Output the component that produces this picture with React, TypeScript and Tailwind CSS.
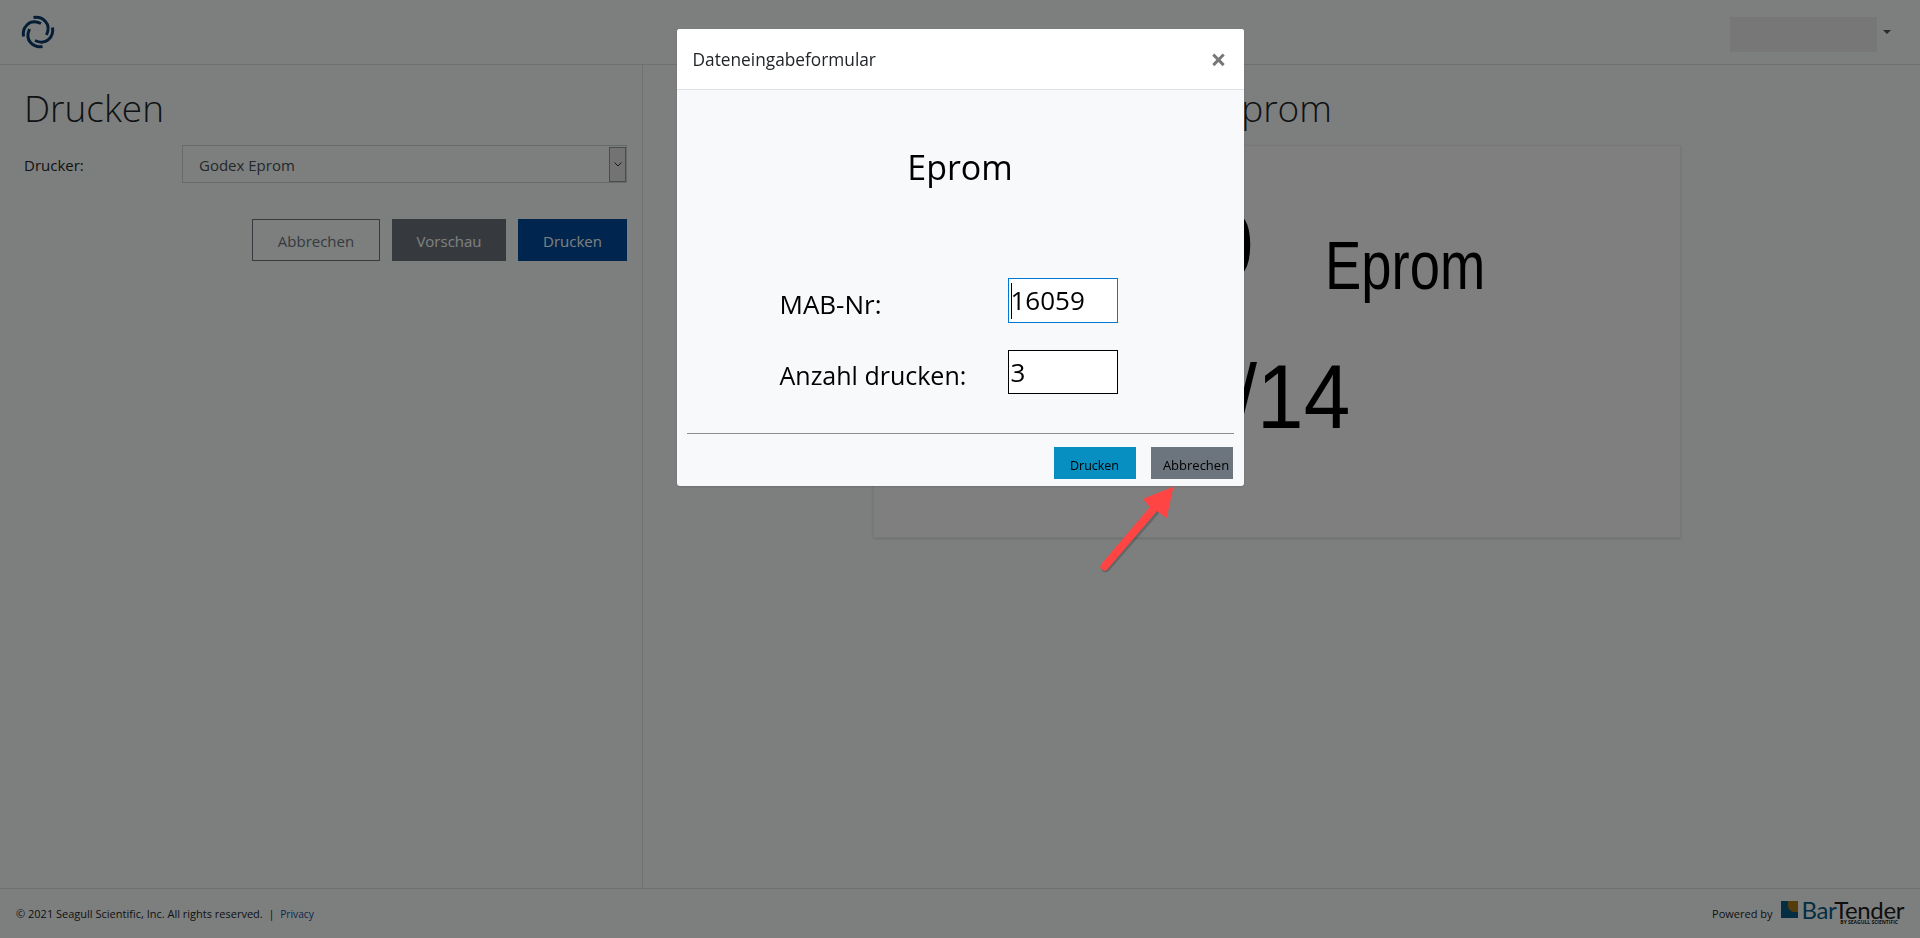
const sans = "font-['Open_Sans','Noto_Sans',sans-serif]";

const Logo = () => (
  <svg width="36" height="36" viewBox="0 0 36 36" fill="none" stroke="#0b3a6b" strokeWidth="3" className="-ml-[4px]">
    <path d="M13.500 3.500 C22 2 32 9 26.500 21" />
    <path d="M13.500 3.500 C22 2 32 9 26.500 21" transform="rotate(90 18 18)" />
    <path d="M13.500 3.500 C22 2 32 9 26.500 21" transform="rotate(180 18 18)" />
    <path d="M13.500 3.500 C22 2 32 9 26.500 21" transform="rotate(270 18 18)" />
  </svg>
);

const BarTenderLogo = () => (
  <div className="flex flex-col items-end -mt-[2px]">
    <div className="flex items-center gap-[4px] h-[19px]">
      <svg width="17" height="17" viewBox="0 0 17 17">
        <rect width="17" height="17" fill="#0b5d85" />
        <path d="M7 0 H17 V11 H13 C10 11 7 8 7 4 Z" fill="#a87a16" />
      </svg>
      <span className="font-['Lato',sans-serif] text-[24px] leading-[19px] tracking-[-0.4px]">
        <span className="text-[#0b5d85]">Bar</span>
        <span className="text-[#1c1c1c]">Tender</span>
      </span>
    </div>
    <span className={`${sans} text-[5px] leading-[6px] font-bold text-[#222] pr-[6px]`}>BY SEAGULL SCIENTIFIC</span>
  </div>
);

const PrintLabel = () => (
  <div className="relative h-full overflow-hidden font-['Liberation_Sans',sans-serif] text-black">
    <span className="absolute left-[140px] top-[52px] text-[96px] leading-[96px] scale-x-90 origin-left">16059</span>
    <span className="absolute left-[451px] top-[85px] text-[68px] leading-[68px] scale-x-[0.8] origin-left">Eprom</span>
    <span className="absolute right-[330px] top-[206px] text-[90px] leading-[90px] scale-x-[0.93] origin-right">01/14</span>
  </div>
);

const Arrow = () => (
  <svg className="absolute left-[1090px] top-[480px]" width="100" height="100" viewBox="0 0 100 100">
    <path d="M15.500 88 L65 31" stroke="#00000030" strokeWidth="9" strokeLinecap="round" />
    <path d="M14.500 86.500 L63.500 29" stroke="#ff4444" strokeWidth="8" strokeLinecap="round" />
    <path d="M83.500 6.700 L53 18.700 L59 26 L68 31.700 L76.600 38 Z" fill="#ff4444" />
  </svg>
);

const DataDialog = () => (
  <div className="fixed inset-0 z-10 flex justify-center bg-black/50 pt-[29px]">
    <div className={`${sans} flex h-[457px] w-[567px] flex-col overflow-hidden rounded-[3px] bg-[#f8f9fb] shadow`}>
      <div className="flex h-[61px] shrink-0 items-center justify-between border-b border-[#dee2e6] bg-white pl-[16px] pr-[17px]">
        <span className="pt-[2px] text-[17.300px] text-[#212529]">Dateneingabeformular</span>
        <span className="text-[28px] leading-none font-bold text-[#777]">×</span>
      </div>
      <div className="flex flex-1 flex-col px-[10px]">
        <h2 className="mt-[55px] text-center text-[34px] leading-[44px] text-black">Eprom</h2>
        <div className="mt-[89px] ml-[93px] flex h-[45px] items-center">
          <label className="mt-[8px] w-[228px] text-[26px] text-black">MAB-Nr:</label>
          <div className="flex h-[45px] w-[110px] items-center border border-[#0078d7] bg-white pl-[2px] text-[26px] text-black">
            <span className="h-[36px] w-px -mr-px bg-black"></span>
            16059
          </div>
        </div>
        <div className="mt-[27px] ml-[93px] flex h-[44px] items-center">
          <label className="mt-[8px] w-[228px] text-[25px] text-black whitespace-nowrap">Anzahl drucken:</label>
          <div className="flex h-[44px] w-[110px] items-center border border-black bg-white pl-[2px] text-[26px] text-black">3</div>
        </div>
        <div className="mt-[39px] border-t border-[#8d8d8d]"></div>
        <div className="mt-[13px] flex justify-end gap-[15px] pr-px">
          <button className="h-[32px] w-[82px] bg-[#068fc0] pt-[6px] text-[12.500px] text-black">Drucken</button>
          <button className="h-[32px] w-[82px] bg-[#6c757d] pt-[6px] pl-[9px] text-[13px] text-black">Abbrechen</button>
        </div>
      </div>
    </div>
    <Arrow />
  </div>
);

export default function App() {
  return (
    <div className={`${sans} flex h-[938px] flex-col overflow-hidden bg-[#fbfffd] text-[#212529]`}>
      <header className="flex h-[65px] shrink-0 items-center justify-between border-b border-[#dfe3e1] pl-[24px] pr-[29px]">
        <Logo />
        <div className="flex items-center gap-[6px]">
          <div className="mt-[5px] h-[35px] w-[147px] bg-[#eeefee]"></div>
          <div className="h-0 w-0 border-x-[4px] border-t-[4px] border-x-transparent border-t-[#555]"></div>
        </div>
      </header>
      <main className="flex flex-1">
        <section className="w-[643px] shrink-0 border-r border-[#dfe3e1] pl-[24px] pr-[15px]">
          <h1 className="mt-[19px] text-[37px] leading-[48px] font-light">Drucken</h1>
          <div className="mt-[13px] flex h-[38px] items-center">
            <label className="w-[158px] pt-[2px] text-[15px]">Drucker:</label>
            <div className="flex h-[38px] flex-1 items-center justify-between border border-[#ced4da] pl-[16px] text-[15px] text-[#495057]">
              <span className="pt-[2px]">Godex Eprom</span>
              <div className="flex h-[35px] w-[17px] items-center justify-center border border-[#999] bg-[#e6e6e6]">
                <svg width="8" height="5" viewBox="0 0 8 5" fill="none" stroke="#333"><path d="M0.500 0.500 L4 4 L7.500 0.500" /></svg>
              </div>
            </div>
          </div>
          <div className="mt-[36px] flex justify-end gap-[12px]">
            <button className="h-[42px] w-[128px] border border-[#6c757d] pt-[2px] text-[15px] text-[#6c757d]">Abbrechen</button>
            <button className="h-[42px] w-[114px] bg-[#6c757d] pt-[2px] text-[15px] text-white">Vorschau</button>
            <button className="h-[42px] w-[109px] bg-[#004c9e] pt-[2px] text-[15px] text-white">Drucken</button>
          </div>
        </section>
        <section className="flex-1">
          <div className="mt-[19px] ml-[230px] flex w-[808px] justify-end pr-[349px]">
            <h1 className="text-[37px] leading-[48px] font-light whitespace-nowrap">Vorschau Eprom</h1>
          </div>
          <div className="mt-[13px] ml-[230px] h-[393px] w-[808px] border border-[#eceeed] bg-white shadow-sm">
            <PrintLabel />
          </div>
        </section>
      </main>
      <footer className="flex h-[50px] shrink-0 items-center justify-between border-t border-[#dfe3e1] pl-[16px] pr-[16px] text-[11px]">
        <span className="pt-[2px]">
          © 2021 Seagull Scientific, Inc. All rights reserved.&nbsp; |&nbsp; <span className="text-[10.200px] text-[#0b4f9e]">Privacy</span>
        </span>
        <div className="flex items-center gap-[8px]">
          <span className="pt-[2px]">Powered by</span>
          <BarTenderLogo />
        </div>
      </footer>
      <DataDialog />
    </div>
  );
}
